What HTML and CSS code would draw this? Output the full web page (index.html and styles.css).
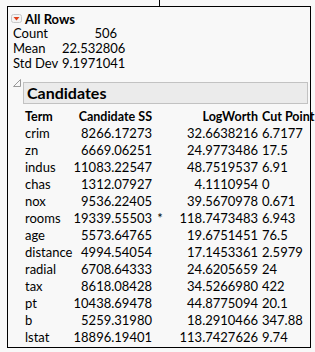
FILE: index.html
```html
<!DOCTYPE html>
<html>
<head>
    <title>All Rows</title>
    <link rel="stylesheet" href="styles.css">
</head>
<body>
    <div class="stub"></div>
    <div class="report">
        <div class="node-title">
            <span class="disclose">
                <svg width="11" height="9" viewBox="0 0 11 9"><rect x="0.5" y="0.5" width="10" height="8" rx="2" fill="#f4f4f4" stroke="#c8c8c8"/><path d="M2.5 3 L8.5 3 L5.5 6.5 Z" fill="#e0401a"/></svg>
            </span>
            <b>All Rows</b>
        </div>
        <div class="stats">
            <span>Count</span><span class="num">506</span>
            <span>Mean</span><span class="num">22.532806</span>
            <span>Std Dev</span><span class="num">9.1971041</span>
        </div>

        <div class="outline">
            <svg class="outline-toggle" width="8" height="8" viewBox="0 0 8 8"><path d="M7.5 0.5 L7.5 7.5 L0.5 7.5 Z" fill="none" stroke="#9a9a9a"/></svg>
            <div class="outline-head">Candidates</div>
        </div>

        <table class="cands">
            <colgroup><col class="c-term"><col class="c-ss"><col class="c-star"><col class="c-lw"><col class="c-cut"></colgroup>
            <thead>
                <tr><th class="term">Term</th><th class="ss">Candidate SS</th><th class="star"></th><th class="lw">LogWorth</th><th class="cut">Cut Point</th></tr>
            </thead>
            <tbody>
                <tr><td class="term">crim</td><td class="ss">8266.17273</td><td class="star"></td><td class="lw">32.6638216</td><td class="cut">6.7177</td></tr>
                <tr><td class="term">zn</td><td class="ss">6669.06251</td><td class="star"></td><td class="lw">24.9773486</td><td class="cut">17.5</td></tr>
                <tr><td class="term">indus</td><td class="ss">11083.22547</td><td class="star"></td><td class="lw">48.7519537</td><td class="cut">6.91</td></tr>
                <tr><td class="term">chas</td><td class="ss">1312.07927</td><td class="star"></td><td class="lw">4.1110954</td><td class="cut">0</td></tr>
                <tr><td class="term">nox</td><td class="ss">9536.22405</td><td class="star"></td><td class="lw">39.5670978</td><td class="cut">0.671</td></tr>
                <tr><td class="term">rooms</td><td class="ss">19339.55503</td><td class="star">*</td><td class="lw">118.7473483</td><td class="cut">6.943</td></tr>
                <tr><td class="term">age</td><td class="ss">5573.64765</td><td class="star"></td><td class="lw">19.6751451</td><td class="cut">76.5</td></tr>
                <tr><td class="term">distance</td><td class="ss">4994.54054</td><td class="star"></td><td class="lw">17.1453361</td><td class="cut">2.5979</td></tr>
                <tr><td class="term">radial</td><td class="ss">6708.64333</td><td class="star"></td><td class="lw">24.6205659</td><td class="cut">24</td></tr>
                <tr><td class="term">tax</td><td class="ss">8618.08428</td><td class="star"></td><td class="lw">34.5266980</td><td class="cut">422</td></tr>
                <tr><td class="term">pt</td><td class="ss">10438.69478</td><td class="star"></td><td class="lw">44.8775094</td><td class="cut">20.1</td></tr>
                <tr><td class="term">b</td><td class="ss">5259.31980</td><td class="star"></td><td class="lw">18.2910466</td><td class="cut">347.88</td></tr>
                <tr><td class="term">lstat</td><td class="ss">18896.19401</td><td class="star"></td><td class="lw">113.7427626</td><td class="cut">9.74</td></tr>
            </tbody>
        </table>
    </div>
</body>
</html>
```

FILE: styles.css
```css
body { margin: 0; background: #f8f8f8; font-family: Lato, "Noto Sans", Arial, sans-serif; font-size: 13px; color: #000; }
.stub { height: 6px; width: 0; margin-left: 159px; border-left: 1px solid #000; }
.report { margin-left: 7px; width: 304px; height: 342px; border: 1px solid #000; box-sizing: border-box; }
.node-title { display: flex; align-items: center; height: 15px; padding: 4px 0 0 3px; }
.node-title b { font-size: 13px; margin-left: 2px; }
.disclose { display: flex; width: 12px; }
.stats { display: grid; grid-template-columns: 49px 55px; padding-left: 5px; line-height: 15px; }
.stats .num { text-align: right; }
.outline { display: flex; align-items: flex-start; margin-top: 8px; padding-left: 5px; }
.outline-toggle { margin-right: 2px; }
.outline-head { flex: 1; margin-top: 3px; margin-right: 2px; height: 22px; background: #ebebeb; border: 1px solid #c2c2c2; box-sizing: border-box; font-weight: bold; font-size: 16px; line-height: 20px; padding-left: 3px; }
.cands { border-collapse: collapse; table-layout: fixed; width: 284px; margin: 4px 0 0 17px; }
.cands th, .cands td { padding: 0; height: 17px; line-height: 17px; white-space: nowrap; font-weight: normal; overflow: visible; }
.cands th { font-weight: bold; font-size: 12.5px; }
.c-term { width: 45px; }
.c-ss { width: 82px; }
.c-star { width: 16px; }
.c-lw { width: 90px; }
.c-cut { width: 51px; }
.cands .term { text-align: left; }
.cands .ss { text-align: right; }
.cands .star { text-align: center; }
.cands .lw { text-align: right; }
.cands .cut { text-align: left; padding-left: 4px; }
```
